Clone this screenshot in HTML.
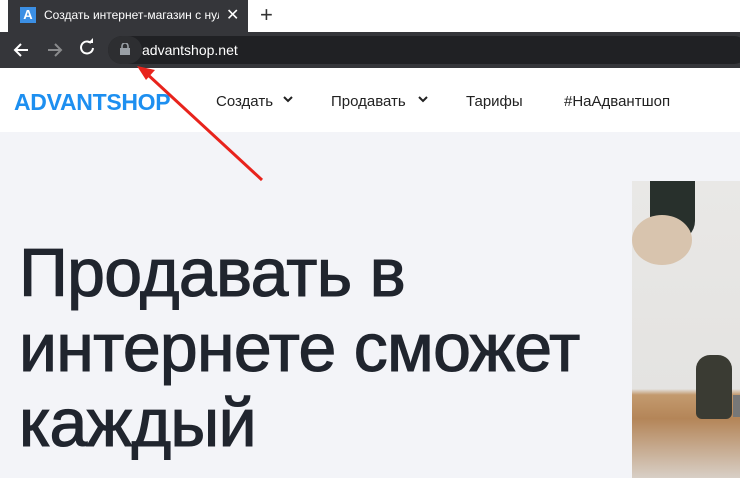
<!DOCTYPE html>
<html><head><meta charset="utf-8"><style>
*{margin:0;padding:0;box-sizing:border-box}
body{width:740px;height:478px;overflow:hidden;position:relative;font-family:"Liberation Sans",sans-serif;background:#f3f4f8}
.abs{position:absolute}
</style></head><body>
<div class="abs" style="left:0;top:0;width:740px;height:32px;background:#fff"></div>
<div class="abs" style="left:8px;top:0;width:240px;height:32px;background:#35363a"></div>
<div class="abs" style="left:20px;top:7px;width:16px;height:16px;background:#3b8fe4;color:#fff;font-size:13px;font-weight:bold;text-align:center;line-height:16px">A</div>
<div class="abs" style="left:44px;top:8px;width:175px;overflow:hidden;white-space:nowrap;color:#fff;font-size:12px">Создать интернет-магазин с нуля</div>
<div class="abs" style="left:226px;top:5px;color:#fff;font-size:16px">✕</div>
<div class="abs" style="left:260px;top:2px;color:#333;font-size:22px">+</div>
<div class="abs" style="left:0;top:32px;width:740px;height:36px;background:#35363a"></div>
<svg class="abs" style="left:0;top:32px" width="108" height="36">
<path d="M28 18H15M21 12l-6 6 6 6" stroke="#fff" stroke-width="2" fill="none"/>
<path d="M48 18h13M55 12l6 6-6 6" stroke="#8a8b8d" stroke-width="2" fill="none"/>
<path d="M93 16a6 6 0 1 1-2-5" stroke="#fff" stroke-width="2" fill="none"/><path d="M88 11h5v-5z" fill="#fff"/>
</svg>
<div class="abs" style="left:108px;top:36px;width:640px;height:28px;background:#202124;border-radius:14px"></div>
<div class="abs" style="left:108px;top:36px;width:34px;height:28px;background:#2d2e31;border-radius:14px"></div>
<svg class="abs" style="left:120px;top:43px" width="10" height="12"><rect x="0" y="5" width="10" height="7" fill="#9aa0a6"/><path d="M2 5V3a3 3 0 0 1 6 0v2" stroke="#9aa0a6" stroke-width="1.6" fill="none"/></svg>
<div class="abs" style="left:142px;top:42px;color:#fff;font-size:14px">advantshop.net</div>
<div class="abs" style="left:0;top:68px;width:740px;height:64px;background:#fff"></div>
<div class="abs" style="left:14px;top:89px;color:#1d8ff0;font-size:23px;font-weight:bold;letter-spacing:-0.3px">ADVANTSHOP</div>
<div class="abs" style="left:216px;top:93px;color:#222;font-size:15px">Создать</div>
<div class="abs" style="left:331px;top:93px;color:#222;font-size:15px">Продавать</div>
<div class="abs" style="left:466px;top:93px;color:#222;font-size:15px">Тарифы</div>
<div class="abs" style="left:564px;top:93px;color:#222;font-size:15px">#НаАдвантшоп</div>
<svg class="abs" style="left:0;top:0" width="740" height="478">
<path d="M284 97l4 4 4-4M419 97l4 4 4-4" stroke="#222" stroke-width="2" fill="none"/>
<line x1="262" y1="180" x2="146" y2="73" stroke="#e8231c" stroke-width="3"/>
<path d="M137 66l18 4-9 10z" fill="#e8231c"/>
</svg>
<div class="abs" style="left:632px;top:181px;width:108px;height:297px;background:linear-gradient(#e9e8e6,#e4e3e1 70%,#c39a6e 72%,#b48558 80%,#d8cfc6 100%)"></div>
<div class="abs" style="left:650px;top:181px;width:45px;height:60px;background:#28302c;border-radius:0 0 20px 20px"></div>
<div class="abs" style="left:632px;top:215px;width:60px;height:50px;background:#d8c4ae;border-radius:50%"></div>
<div class="abs" style="left:696px;top:355px;width:36px;height:64px;background:#3a3b33;border-radius:14px 14px 6px 6px"></div>
<div class="abs" style="left:733px;top:395px;width:10px;height:22px;background:#777"></div>
<div class="abs" style="left:19px;top:236px;color:#20252e;font-size:68px;line-height:75px;letter-spacing:-0.7px;-webkit-text-stroke:1.1px #20252e">Продавать в<br>интернете сможет<br>каждый</div>
</body></html>
